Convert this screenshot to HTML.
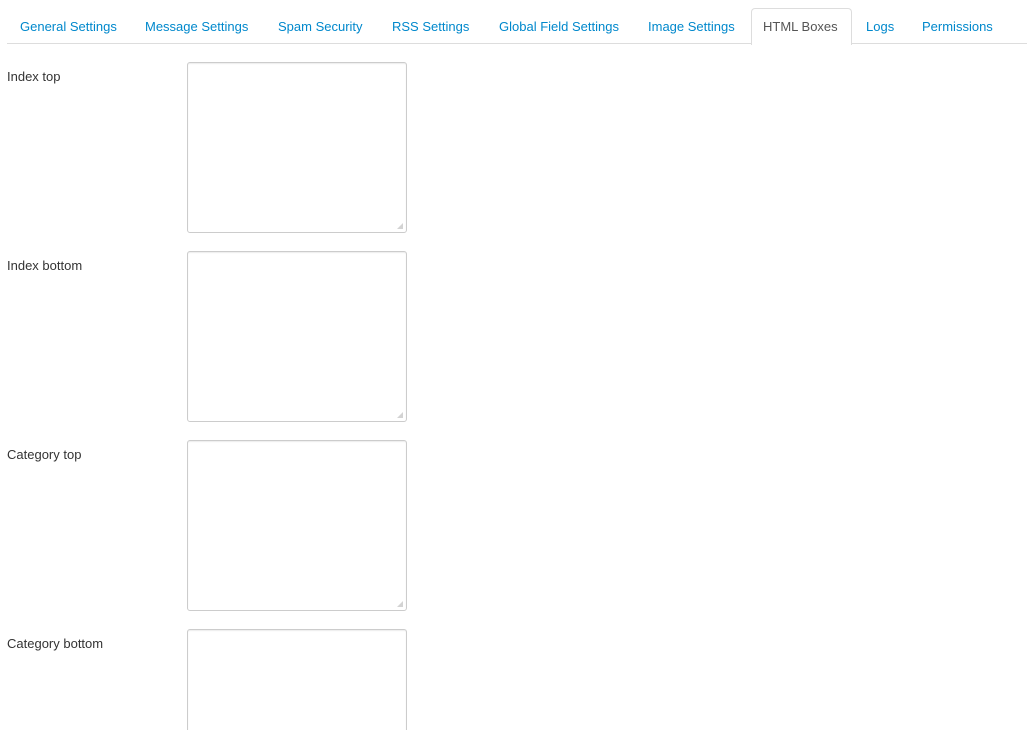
<!DOCTYPE html>
<html style="overflow:hidden;height:730px"><head><style>
body{margin:0;background:#fff;font-family:"Liberation Sans",Arial,sans-serif;font-size:13px;width:1027px;height:730px;overflow:hidden;position:relative}
.line{position:absolute;left:7px;right:0;top:43px;height:1px;background:#ddd}
.tab{position:absolute;top:19px;color:#0088cc;white-space:nowrap;line-height:16px}
.active{position:absolute;left:751px;top:8px;width:99px;height:36px;border:1px solid #ddd;border-bottom:none;border-radius:4px 4px 0 0;background:#fff}
.lbl{position:absolute;left:7px;color:#333;line-height:16px}
.ta{position:absolute;left:187px;width:218px;height:169px;border:1px solid #ccc;border-radius:3px;box-shadow:inset 0 1px 1px rgba(0,0,0,.075)}
.ta i{position:absolute;right:3px;bottom:3px;width:6px;height:6px;background:radial-gradient(circle,#999 0.6px,transparent 0.9px) 0 0/2px 2px;clip-path:polygon(100% 0,100% 100%,0 100%)}
</style></head><body>
<div class="line"></div>
<div class="active"></div>
<span class="tab" style="left:20px">General Settings</span>
<span class="tab" style="left:145px">Message Settings</span>
<span class="tab" style="left:278px">Spam Security</span>
<span class="tab" style="left:392px">RSS Settings</span>
<span class="tab" style="left:499px">Global Field Settings</span>
<span class="tab" style="left:648px">Image Settings</span>
<span class="tab" style="left:763px;color:#555">HTML Boxes</span>
<span class="tab" style="left:866px">Logs</span>
<span class="tab" style="left:922px">Permissions</span>
<span class="lbl" style="top:69px">Index top</span>
<div class="ta" style="top:62px"><i></i></div>
<span class="lbl" style="top:258px">Index bottom</span>
<div class="ta" style="top:251px"><i></i></div>
<span class="lbl" style="top:447px">Category top</span>
<div class="ta" style="top:440px"><i></i></div>
<span class="lbl" style="top:636px">Category bottom</span>
<div class="ta" style="top:629px;height:101px;border-bottom:none;border-radius:3px 3px 0 0"></div>
</body></html>
